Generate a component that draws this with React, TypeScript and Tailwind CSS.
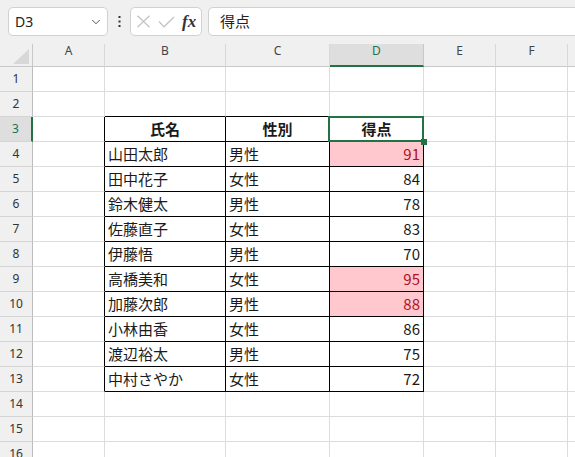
import { ChevronDown } from 'lucide-react';

// Excel-like sheet: formula bar + grid with a bordered score table

type Col = { label: string; width: string };

const columns: Col[] = [
  { label: 'A', width: 'w-[72px]' },
  { label: 'B', width: 'w-[121px]' },
  { label: 'C', width: 'w-[104px]' },
  { label: 'D', width: 'w-[94px]' },
  { label: 'E', width: 'w-[72px]' },
  { label: 'F', width: 'w-[72px]' },
  { label: 'G', width: 'w-[72px]' },
];

const rows: { name: string; sex: string; score: string; low?: boolean }[] = [
  { name: '山田太郎', sex: '男性', score: '91', low: true },
  { name: '田中花子', sex: '女性', score: '84' },
  { name: '鈴木健太', sex: '男性', score: '78' },
  { name: '佐藤直子', sex: '女性', score: '83' },
  { name: '伊藤悟', sex: '男性', score: '70' },
  { name: '高橋美和', sex: '女性', score: '95', low: true },
  { name: '加藤次郎', sex: '男性', score: '88', low: true },
  { name: '小林由香', sex: '女性', score: '86' },
  { name: '渡辺裕太', sex: '男性', score: '75' },
  { name: '中村さやか', sex: '女性', score: '72' },
];

const uiFont = { fontFamily: '"Noto Sans", "Liberation Sans", sans-serif' };
const cellFont = { fontFamily: '"Noto Sans CJK JP", "Noto Sans", sans-serif' };

const FormulaBar = () => (
  <div className="flex h-[36px] w-[700px] items-start bg-[#f0f0f0] pt-[7px]">
    {/* Name box */}
    <div
      className="ml-[8px] flex h-[29px] w-[100px] shrink-0 items-center justify-between rounded-[5px] border border-[#d1d1d1] bg-white pl-[6px] pr-[4px] text-[14px] text-[#222]"
      style={uiFont}
    >
      <span>D3</span>
      <ChevronDown className="h-[14px] w-[14px] text-[#444]" strokeWidth={1.6} />
    </div>
    <div className="flex h-[29px] w-[22px] shrink-0 items-center justify-center">
      <svg width="3" height="11" viewBox="0 0 3 11">
        <rect x="0.5" y="0" width="2" height="2" fill="#333" />
        <rect x="0.5" y="4.5" width="2" height="2" fill="#333" />
        <rect x="0.5" y="9" width="2" height="2" fill="#333" />
      </svg>
    </div>
    {/* Cancel / enter / fx */}
    <div className="flex h-[29px] w-[72px] shrink-0 items-center gap-[7px] rounded-[5px] border border-[#d1d1d1] bg-white pl-[5px]">
      <svg width="15" height="13" viewBox="0 0 15 13" fill="none" stroke="#c2c2c2" strokeWidth="1.2">
        <path d="M1.5 0.8 L13.5 12.2 M13.5 0.8 L1.5 12.2" />
      </svg>
      <svg width="17" height="12" viewBox="0 0 17 12" fill="none" stroke="#c2c2c2" strokeWidth="1.2">
        <path d="M1 5.5 L6 10.8 L16 1" />
      </svg>
      <span
        className="text-[17px] font-semibold italic leading-none text-[#333]"
        style={{ fontFamily: '"Liberation Serif", serif' }}
      >
        fx
      </span>
    </div>
    {/* Formula input */}
    <div
      className="ml-[6px] flex h-[29px] w-[400px] shrink-0 items-center rounded-l-[5px] border border-[#d1d1d1] bg-white pl-[11px] text-[15px] text-[#222]"
      style={cellFont}
    >
      得点
    </div>
  </div>
);

const ColumnHeader = () => (
  <div className="flex h-[31px] w-[700px] items-end bg-[#f0f0f0]" style={uiFont}>
    <div className="flex h-[23px] w-[33px] shrink-0 items-end justify-end border-b border-r border-[#c8c8c8] pb-[2px] pr-[3px]">
      <svg width="16" height="15" viewBox="0 0 16 15">
        <polygon points="0,15 16,0 16,15" fill="#d8d8d8" />
      </svg>
    </div>
    {columns.map((c) =>
      c.label === 'D' ? (
        <div
          key={c.label}
          className={`${c.width} flex h-[23px] shrink-0 justify-center border-b-2 border-r border-b-[#217346] border-r-[#c8c8c8] bg-[#dedede] pt-[1px] text-[12px] leading-none text-[#217346]`}
        >
          {c.label}
        </div>
      ) : (
        <div
          key={c.label}
          className={`${c.width} flex h-[23px] shrink-0 justify-center border-b border-r border-b-[#c8c8c8] border-r-[#d8d8d8] pt-[1px] text-[12px] leading-none text-[#444]`}
        >
          {c.label}
        </div>
      )
    )}
  </div>
);

function cellBorders(r: number, ci: number) {
  const rightBlack = r >= 3 && r <= 13 && ci <= 3;
  const bottomBlack = r >= 2 && r <= 13 && ci >= 1 && ci <= 3;
  return `border-r border-b ${rightBlack ? 'border-r-black' : 'border-r-[#dcdcdc]'} ${
    bottomBlack ? 'border-b-black' : 'border-b-[#dcdcdc]'
  }`;
}

const Row = ({ r }: { r: number }) => {
  const rec = r >= 4 && r <= 13 ? rows[r - 4] : null;
  const selected = r === 3;
  return (
    <div className="flex h-[25px]">
      <div
        className={`flex w-[33px] shrink-0 items-center justify-center border-b border-b-[#d4d4d4] text-[12px] ${
          selected
            ? 'border-r-2 border-r-[#217346] bg-[#dedede] text-[#217346]'
            : 'border-r border-r-[#bdbdbd] bg-[#f0f0f0] text-[#333]'
        }`}
        style={uiFont}
      >
        {r}
      </div>
      {columns.map((c, ci) => {
        let content: React.ReactNode = null;
        let extra = '';
        if (r === 3 && ci >= 1 && ci <= 3) {
          content = ['氏名', '性別', '得点'][ci - 1];
          extra = 'justify-center font-bold';
        } else if (rec && ci === 1) {
          content = rec.name;
          extra = 'pl-[3px]';
        } else if (rec && ci === 2) {
          content = rec.sex;
          extra = 'pl-[3px]';
        } else if (rec && ci === 3) {
          content = rec.score;
          extra = `justify-end pr-[3px] ${rec.low ? 'bg-[#ffc7ce] text-[#b0101c]' : ''}`;
        }
        return (
          <div
            key={c.label}
            className={`${c.width} relative flex shrink-0 items-center text-[15px] text-[#1a1a1a] ${cellBorders(r, ci)} ${extra}`}
            style={cellFont}
          >
            {content}
            {r === 3 && ci === 3 && (
              <>
                <div className="pointer-events-none absolute -bottom-[1px] -left-[2px] -right-[1px] -top-[1px] z-10 border-2 border-[#217346]" />
                <div className="absolute left-[91px] top-[22px] z-20 h-[6px] w-[6px] bg-[#217346]" />
              </>
            )}
          </div>
        );
      })}
    </div>
  );
};

export default function App() {
  return (
    <div className="h-[457px] w-[575px] overflow-hidden bg-white">
      <FormulaBar />
      <ColumnHeader />
      <div className="w-[700px]">
        {Array.from({ length: 16 }, (_, i) => (
          <Row key={i + 1} r={i + 1} />
        ))}
      </div>
    </div>
  );
}
